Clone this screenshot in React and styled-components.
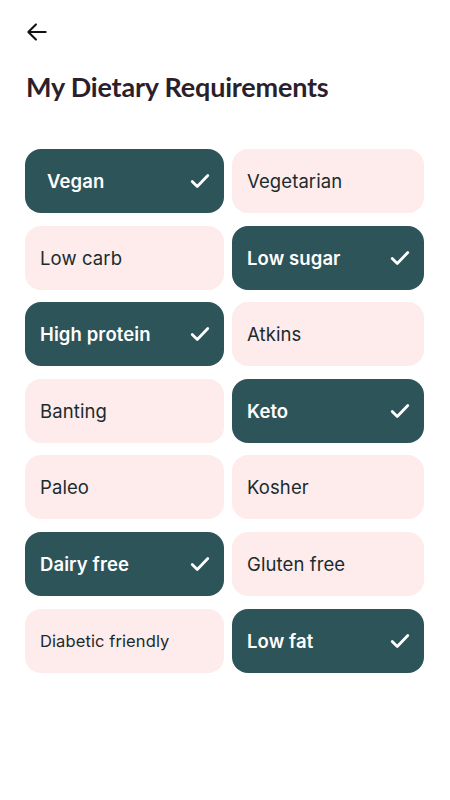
import styled, { createGlobalStyle } from "styled-components";

const GlobalStyle = createGlobalStyle`
  body {
    margin: 0;
    background: #ffffff;
    font-family: Inter, "Liberation Sans", sans-serif;
  }
`;

const options = [
    { label: "Vegan", selected: true, indent: true },
    { label: "Vegetarian" },
    { label: "Low carb" },
    { label: "Low sugar", selected: true },
    { label: "High protein", selected: true },
    { label: "Atkins" },
    { label: "Banting" },
    { label: "Keto", selected: true },
    { label: "Paleo" },
    { label: "Kosher" },
    { label: "Dairy free", selected: true },
    { label: "Gluten free" },
    { label: "Diabetic friendly", small: true },
    { label: "Low fat", selected: true },
];

const Check = () => (
    <svg width="22" height="22" viewBox="0 0 24 24" fill="none">
        <path
            d="M3.5 12.5l5.5 5.5L20.5 6"
            stroke="#ffffff"
            strokeWidth="3"
            strokeLinecap="round"
            strokeLinejoin="round"
        />
    </svg>
);

const App = () => {
    return (
        <Page>
            <GlobalStyle />
            <BackButton aria-label="Back">
                <svg width="26" height="26" viewBox="0 0 24 24" fill="none">
                    <path
                        d="M20 12H4.5M11 5l-7 7 7 7"
                        stroke="#111"
                        strokeWidth="1.9"
                        strokeLinecap="round"
                        strokeLinejoin="round"
                    />
                </svg>
            </BackButton>
            <Title>My Dietary Requirements</Title>
            <Grid>
                {options.map((o) => (
                    <Option
                        key={o.label}
                        $selected={o.selected}
                        $indent={o.indent}
                        $small={o.small}
                    >
                        <span>{o.label}</span>
                        {o.selected && <Check />}
                    </Option>
                ))}
            </Grid>
        </Page>
    );
};

const Page = styled.div`
    padding: 19px 26px 40px 25px;
`;

const BackButton = styled.button`
    display: flex;
    padding: 0;
    margin: 0 0 0 -1px;
    border: none;
    background: none;
`;

const Title = styled.h1`
    margin: 22px 0 0 1px;
    font-family: Lato, "Open Sans", sans-serif;
    font-weight: 700;
    font-size: 27px;
    letter-spacing: -0.2px;
    color: #2c1f2c;
    line-height: 40px;
`;

const Grid = styled.div`
    display: grid;
    grid-template-columns: 199px 192px;
    column-gap: 8px;
    row-gap: 12.6px;
    margin-top: 42px;
`;

const Option = styled.div`
    height: 64px;
    box-sizing: border-box;
    display: flex;
    align-items: center;
    justify-content: space-between;
    padding: 0 13px 0 ${(p) => (p.$indent ? "22px" : "15px")};
    border-radius: 16px;
    background: ${(p) => (p.$selected ? "#2d5459" : "#fdeceb")};
    color: ${(p) => (p.$selected ? "#ffffff" : "#1a2b2e")};
    font-size: ${(p) => (p.$small ? "16.5px" : "18.5px")};
    font-weight: ${(p) => (p.$selected ? 600 : 400)};
    letter-spacing: 0.1px;
`;

export default App;
